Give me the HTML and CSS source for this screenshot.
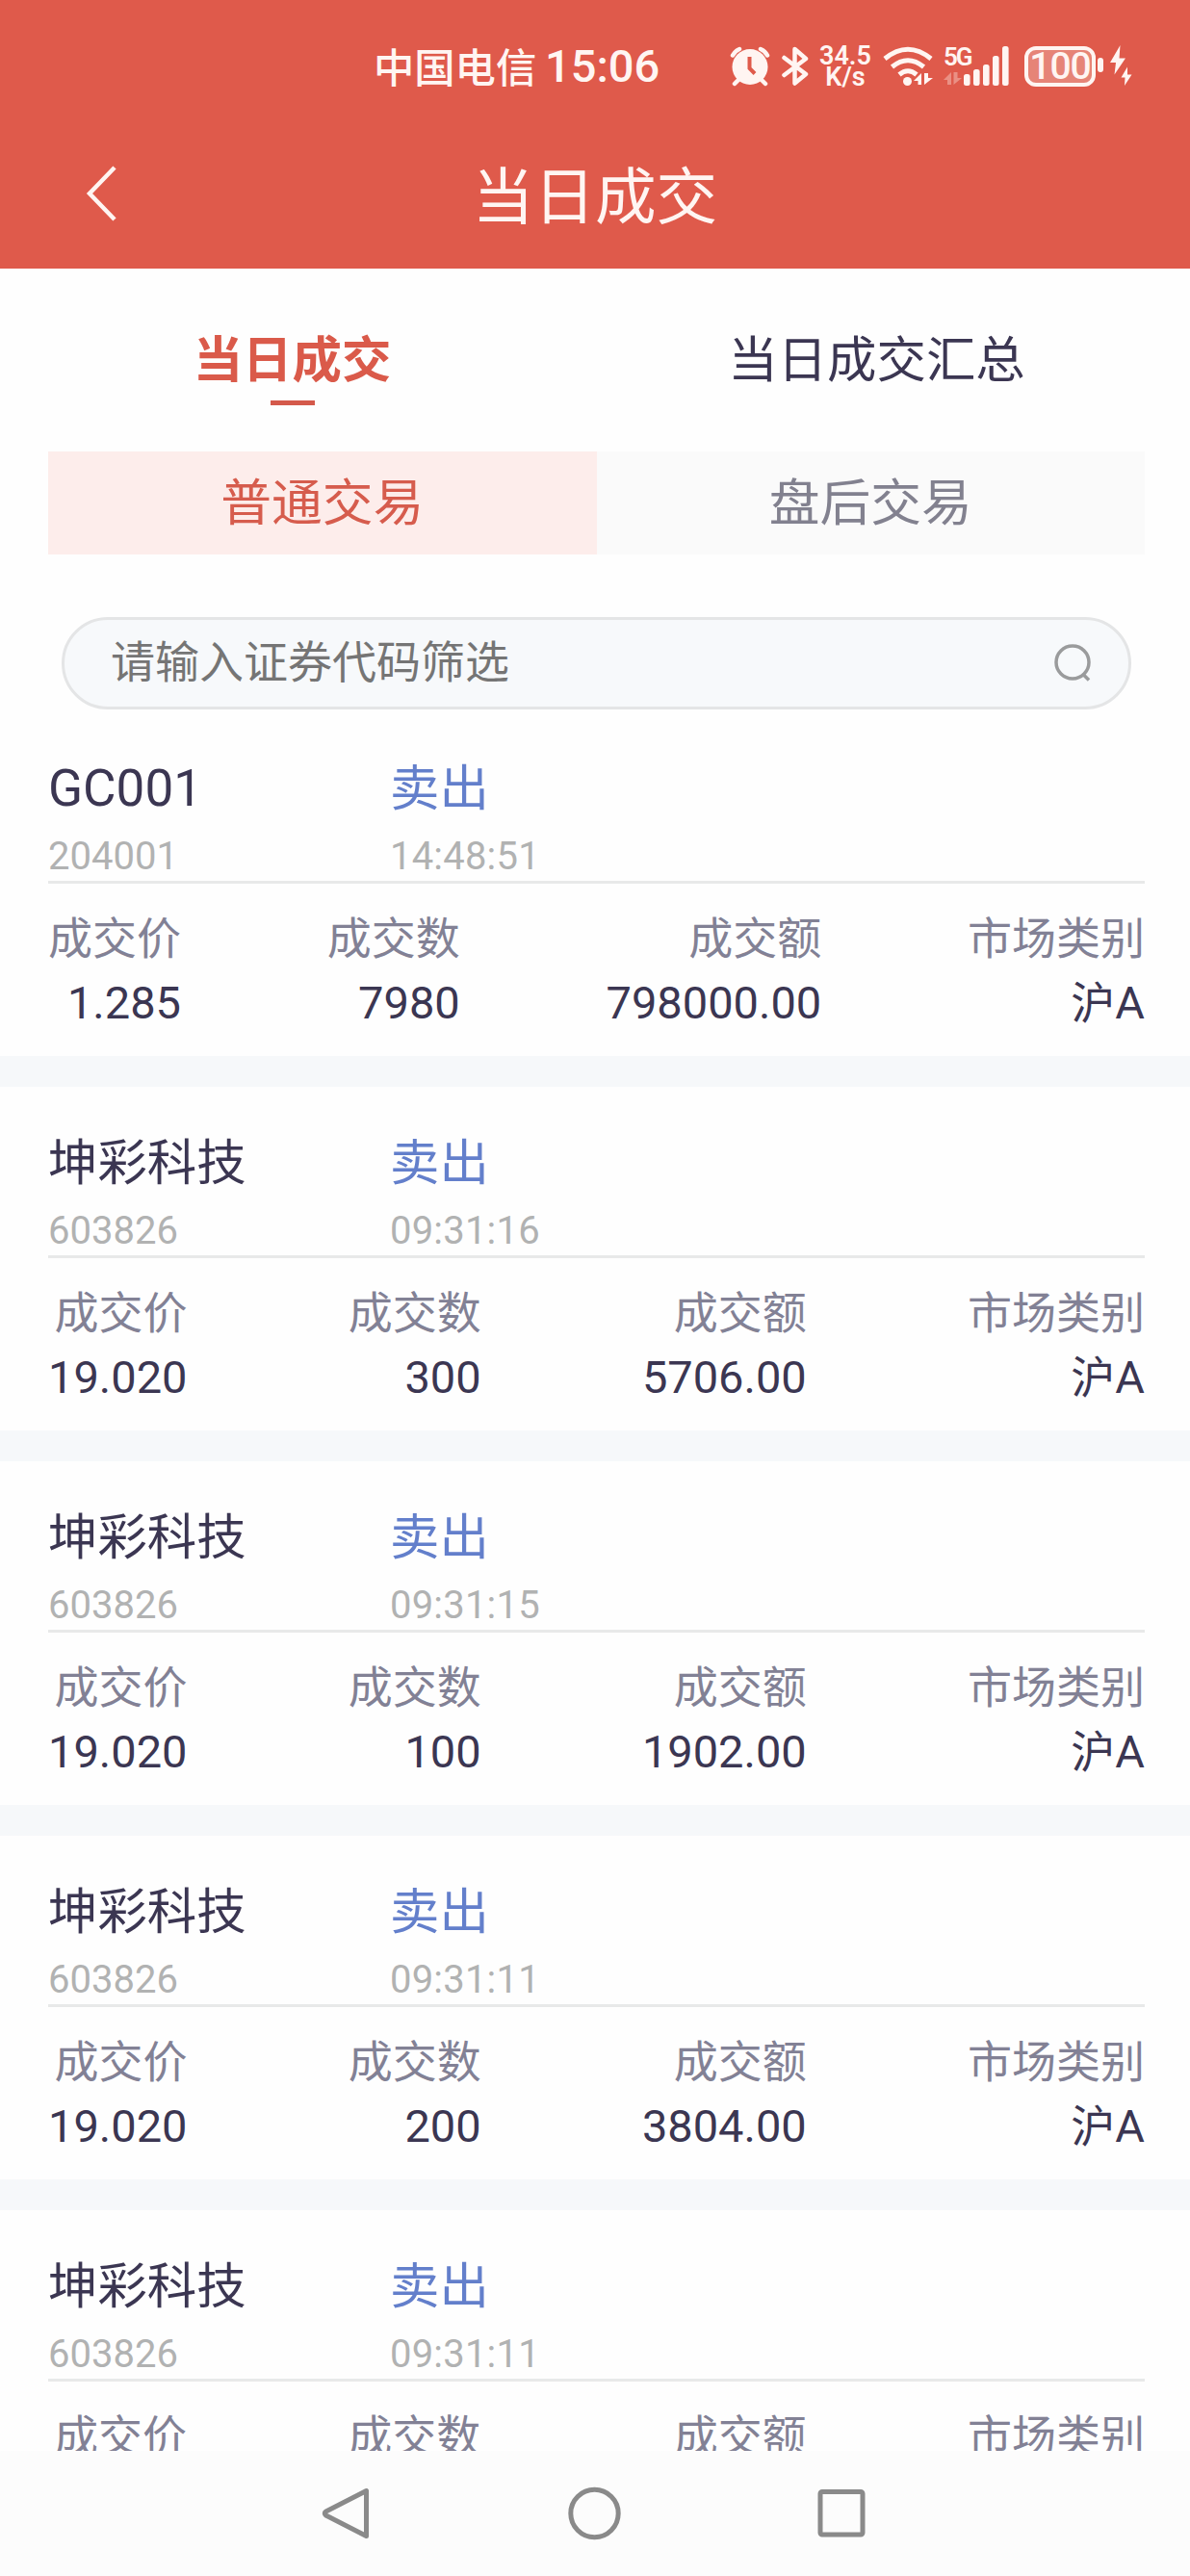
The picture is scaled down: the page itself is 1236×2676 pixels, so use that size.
FILE: index.html
```html
<!DOCTYPE html>
<html lang="zh-CN">
<head>
<meta charset="utf-8">
<title>当日成交</title>
<link rel="stylesheet" href="styles.css">
</head>
<body>
<div class="screen">
  <header class="header">
    <div class="status">
      <span class="carrier">中国电信</span>
      <span class="clock">15:06</span>
      <svg class="ic-alarm" width="42" height="42" viewBox="0 0 42 42" fill="#fff5f2">
        <circle cx="21" cy="21.500" r="18.500"/>
        <path d="M3 9.500A14 14 0 0 1 10 3M32 3A14 14 0 0 1 39 9.500M10 34L5 39M32 34L37 39" fill="none" stroke="#fff5f2" stroke-width="4.500" stroke-linecap="round"/>
        <path d="M20.500 11V23L26 28.500" fill="none" stroke="#df5a4b" stroke-width="4"/>
      </svg>
      <svg class="ic-bt" width="28" height="42" viewBox="0 0 28 42" fill="none" stroke="#fff5f2" stroke-width="4.500" stroke-linecap="round" stroke-linejoin="round">
        <path d="M2.500 12L25 29L13.500 38.500V3L25 13L2.500 30"/>
      </svg>
      <span class="speed"><b>34.5</b><b>K/s</b></span>
      <svg class="ic-wifi" width="54" height="42" viewBox="0 0 54 42" fill="#fff5f2">
        <g fill="none" stroke="#fff5f2" stroke-width="5">
          <path d="M2 13Q26 -6.500 50 13"/>
          <path d="M9.500 21.500Q26 8 42.500 21.500"/>
          <path d="M17 29.500Q26 22 35 29.500"/>
        </g>
        <circle cx="25.500" cy="36.500" r="4.500"/>
        <path d="M32 36L40 28V40H36.500V36ZM43 28V40L52 33H47V28Z"/>
      </svg>
      <div class="signal">
        <span class="net">5G</span>
        <svg width="68" height="42" viewBox="0 0 68 42" fill="#fff5f2">
          <path d="M0 35L8 27V40H4V35ZM10.500 27V40L19 33H14.500V27Z" opacity=".35"/>
          <rect x="21" y="29" width="6.600" height="12" rx="2.500"/>
          <rect x="31" y="24" width="6.600" height="17" rx="2.500"/>
          <rect x="41" y="19" width="6.600" height="22" rx="2.500"/>
          <rect x="51" y="10" width="6.600" height="31" rx="2.500"/>
          <rect x="61" y="0" width="6.600" height="41" rx="2.500"/>
        </svg>
      </div>
      <span class="battery">100</span>
      <svg class="ic-charge" width="36" height="43" viewBox="0 0 36 43" fill="#fff5f2">
        <rect x="0" y="13" width="6" height="15" rx="3"/>
        <path d="M23.500 0L13 18H19L17.500 30.500L29 13.500H22.500ZM31 22.500L24.500 33.500H28.500L28 42L35.500 30.500H31Z"/>
      </svg>
    </div>
    <div class="titlebar">
      <svg class="back" width="38" height="60" viewBox="0 0 38 60" fill="none" stroke="#fff5f2" stroke-width="4.500"><path d="M33 3L7 30L33 57"/></svg>
      <h1>当日成交</h1>
    </div>
  </header>

  <nav class="tabs">
    <a class="tab active">当日成交</a>
    <a class="tab">当日成交汇总</a>
  </nav>

  <div class="segments">
    <span class="segment on">普通交易</span>
    <span class="segment">盘后交易</span>
  </div>

  <div class="search">
    <span>请输入证券代码筛选</span>
    <svg width="40" height="42" viewBox="0 0 40 42" fill="none" stroke="#9a9b9c" stroke-width="3.500"><circle cx="20" cy="20" r="17"/><path d="M30.500 32L37 38.500"/></svg>
  </div>

  <main class="list">
    <article class="deal">
      <div class="head"><div class="name"><span class="latin">GC001</span></div><div class="side">卖出</div></div>
      <div class="sub"><div class="code">204001</div><div class="time">14:48:51</div></div>
      <div class="cols">
        <div class="col"><label>成交价</label><p><span>1.285</span></p></div>
        <div class="col"><label>成交数</label><p><span>7980</span></p></div>
        <div class="col"><label>成交额</label><p><span>798000.00</span></p></div>
        <div class="col"><label>市场类别</label><p>沪<span>A</span></p></div>
      </div>
    </article>
    <article class="deal">
      <div class="head"><div class="name">坤彩科技</div><div class="side">卖出</div></div>
      <div class="sub"><div class="code">603826</div><div class="time">09:31:16</div></div>
      <div class="cols">
        <div class="col"><label>成交价</label><p><span>19.020</span></p></div>
        <div class="col"><label>成交数</label><p><span>300</span></p></div>
        <div class="col"><label>成交额</label><p><span>5706.00</span></p></div>
        <div class="col"><label>市场类别</label><p>沪<span>A</span></p></div>
      </div>
    </article>
    <article class="deal">
      <div class="head"><div class="name">坤彩科技</div><div class="side">卖出</div></div>
      <div class="sub"><div class="code">603826</div><div class="time">09:31:15</div></div>
      <div class="cols">
        <div class="col"><label>成交价</label><p><span>19.020</span></p></div>
        <div class="col"><label>成交数</label><p><span>100</span></p></div>
        <div class="col"><label>成交额</label><p><span>1902.00</span></p></div>
        <div class="col"><label>市场类别</label><p>沪<span>A</span></p></div>
      </div>
    </article>
    <article class="deal">
      <div class="head"><div class="name">坤彩科技</div><div class="side">卖出</div></div>
      <div class="sub"><div class="code">603826</div><div class="time">09:31:11</div></div>
      <div class="cols">
        <div class="col"><label>成交价</label><p><span>19.020</span></p></div>
        <div class="col"><label>成交数</label><p><span>200</span></p></div>
        <div class="col"><label>成交额</label><p><span>3804.00</span></p></div>
        <div class="col"><label>市场类别</label><p>沪<span>A</span></p></div>
      </div>
    </article>
    <article class="deal last">
      <div class="head"><div class="name">坤彩科技</div><div class="side">卖出</div></div>
      <div class="sub"><div class="code">603826</div><div class="time">09:31:11</div></div>
      <div class="cols">
        <div class="col price"><label>成交价</label></div>
        <div class="col"><label>成交数</label></div>
        <div class="col amount"><label>成交额</label></div>
        <div class="col"><label>市场类别</label></div>
      </div>
    </article>
  </main>

  <footer class="navbar">
    <svg width="56" height="56" viewBox="0 0 56 56"><path d="M46.500 4.500V51.500L4.500 30Q2 28 4.500 26Z"/></svg>
    <svg width="56" height="56" viewBox="0 0 56 56"><circle cx="27.500" cy="28" r="24.700"/></svg>
    <svg width="56" height="56" viewBox="0 0 56 56"><rect x="6" y="5.500" width="44" height="44.500" rx="2"/></svg>
  </footer>
</div>
</body>
</html>
```

FILE: styles.css
```css
* { box-sizing: border-box; }

body {
  margin: 0;
  background: #fefefe;
  font-family: "Noto Sans CJK SC", sans-serif;
  color: #3b3652;
}

.screen {
  width: 1236px;
  height: 2676px;
  overflow: hidden;
  display: flex;
  flex-direction: column;
}

.header {
  height: 279px;
  flex: none;
  background: #df5a4b;
  color: #fff5f2;
}

.status {
  height: 137px;
  padding-left: 388px;
  display: flex;
  align-items: center;
}

.carrier { width: 177px; font-size: 42.300px; font-weight: 500; line-height: 60px; white-space: nowrap; margin-top: -2px; }
.clock { width: 193px; font: 500 47px/50px Roboto, sans-serif; padding-left: 1px; }
.ic-bt { margin-left: 12px; }
.speed {
  width: 56px;
  margin-left: 10px;
  display: flex;
  flex-direction: column;
  align-items: center;
  font: 27px/22px Roboto, sans-serif;
}
.speed b { font-weight: 600; }
.ic-wifi { margin-left: 11px; }
.signal { position: relative; margin-left: 9px; height: 42px; }
.net { position: absolute; left: 0; top: -1px; font: 600 26px/24px Roboto, sans-serif; letter-spacing: -2px; }
.battery {
  width: 74px;
  height: 42px;
  margin-left: 16px;
  border: 4px solid #fff5f2;
  border-radius: 12px;
  background: #e68477;
  font: 500 39px/34px Roboto, sans-serif;
  text-align: center;
  letter-spacing: -1px;
}
.ic-charge { margin-left: 2px; }

.titlebar {
  height: 130px;
  display: grid;
  grid-template-columns: 86px 1fr 86px;
  align-items: center;
}
.back { margin-left: 86px; margin-top: -2px; }
h1 { margin: -6px 0 0; font-size: 63.600px; font-weight: 400; line-height: 80px; text-align: center; }

.tabs {
  height: 190px;
  flex: none;
  padding: 60px 22px 0 0;
  display: grid;
  grid-template-columns: 1fr 1fr;
}
.tab {
  display: flex;
  flex-direction: column;
  align-items: center;
  font-size: 51.400px;
  line-height: 62px;
}
.tab.active { color: #da5a4a; font-weight: 700; }
.tab.active::after {
  content: "";
  width: 46px;
  height: 5px;
  margin-top: 15px;
  background: #d4594b;
}

.segments {
  height: 107px;
  flex: none;
  margin: 0 47px 0 50px;
  display: grid;
  grid-template-columns: 1fr 1fr;
}
.segment {
  background: #fafafa;
  color: #82818f;
  font-size: 52.800px;
  line-height: 98px;
  text-align: center;
}
.segment.on { background: #fdedeb; color: #d65c4d; }

.search {
  height: 96px;
  flex: none;
  margin: 65px 61px 0 64px;
  padding: 0 38px 0 48px;
  border: 3px solid #e4e5e6;
  border-radius: 48px;
  background: #f7f9fb;
  display: flex;
  align-items: center;
  justify-content: space-between;
  color: #757575;
  font-size: 46px;
}
.search span { line-height: 50px; margin-top: -10px; }

.list {
  height: 1806px;
  flex: none;
  margin-top: 3px;
  overflow: hidden;
}
.deal {
  height: 389px;
  padding: 45px 47px 0 50px;
  border-bottom: 32px solid #f6f8fa;
}
.head, .sub { display: grid; grid-template-columns: 355px 1fr; }
.head { height: 60px; font-size: 51.400px; line-height: 60px; }
.latin { font-family: Roboto, sans-serif; font-size: 53px; line-height: 40px; }
.side { color: #637fcb; }
.sub {
  height: 73px;
  padding-top: 25px;
  border-bottom: 3px solid #e8e9e9;
  color: #b1b2b2;
  font: 40px/40px Roboto, sans-serif;
}
.time { letter-spacing: .2px; }
.cols { display: flex; justify-content: space-between; padding-top: 28px; }
.col { display: flex; flex-direction: column; text-align: right; white-space: nowrap; font-size: 46px; line-height: 50px; }
.col label { color: #828195; }
.col p { margin: 17px 0 0; }
.col p span { font-family: Roboto, sans-serif; font-size: 47px; line-height: 40px; }
.price { min-width: 144px; }
.amount { min-width: 171px; }

.navbar {
  height: 130px;
  flex: none;
  background: #fcfcfc;
  display: flex;
  justify-content: center;
  gap: 200px;
  padding-top: 37px;
}
.navbar svg { fill: none; stroke: #8a8a8a; stroke-width: 5; stroke-linejoin: round; }
```
